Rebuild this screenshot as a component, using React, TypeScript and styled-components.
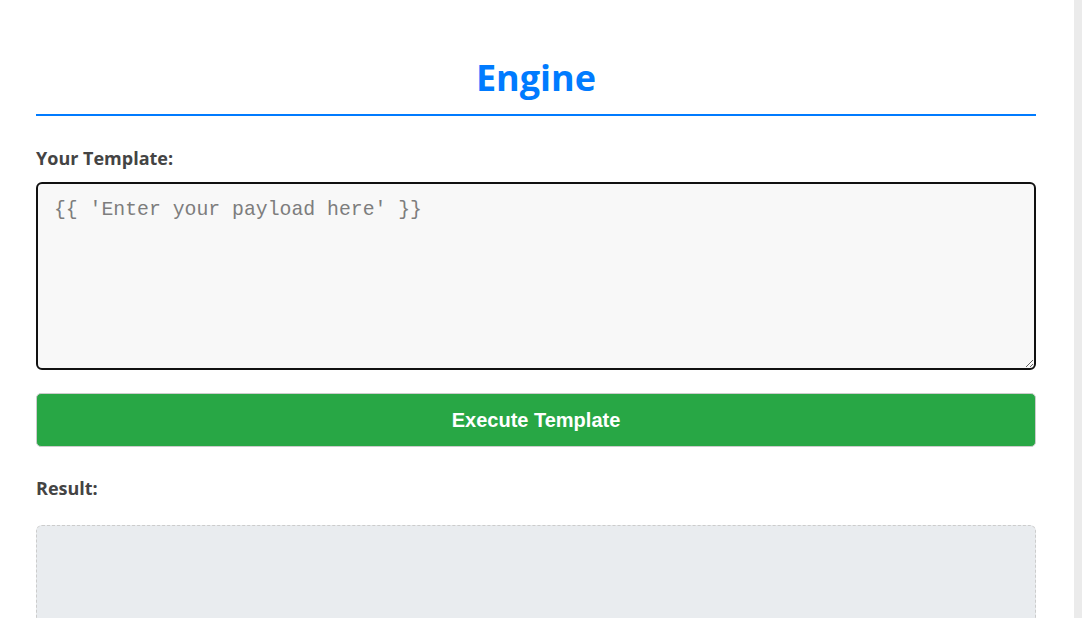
import styled, { createGlobalStyle } from "styled-components";

const GlobalStyle = createGlobalStyle`
  html, body {
    margin: 0;
    height: 100%;
    overflow: hidden;
  }
  body {
    background: #fff;
    font-family: "Open Sans", "Noto Sans", sans-serif;
  }
`;

export default function App() {
  return (
    <>
      <GlobalStyle />
      <Page>
        <Main>
          <Container>
            <Title>Engine</Title>
            <Label htmlFor="template">Your Template:</Label>
            <TemplateInput id="template" placeholder="{{ 'Enter your payload here' }}" />
            <ExecuteButton type="button">Execute Template</ExecuteButton>
            <Label as="div" $top={29}>
              Result:
            </Label>
            <ResultBox />
          </Container>
        </Main>
        <ScrollTrack />
      </Page>
    </>
  );
}

const Page = styled.div`
  display: flex;
  height: 100vh;
`;

const Main = styled.main`
  flex: 1;
  min-width: 0;
  padding-right: 2px;
  overflow-y: auto;
  scrollbar-width: none;

  &::-webkit-scrollbar {
    display: none;
  }
`;

const ScrollTrack = styled.div`
  flex: 0 0 8px;
  background: #ebebeb;
`;

const Container = styled.div`
  max-width: 1000px;
  margin: 0 auto;
  padding: 56px 0 40px;
  display: flex;
  flex-direction: column;
`;

const Title = styled.h1`
  margin: 0;
  font-size: 36px;
  line-height: 44px;
  font-weight: 700;
  color: #007bff;
  text-align: center;
  padding-bottom: 14px;
  border-bottom: 2px solid #007bff;
`;

const Label = styled.label<{ $top?: number }>`
  display: block;
  margin-top: ${({ $top }) => ($top ?? 30)}px;
  margin-bottom: 12px;
  font-size: 18px;
  line-height: 24px;
  font-weight: 700;
  color: #444;
`;

const TemplateInput = styled.textarea`
  box-sizing: border-box;
  width: 100%;
  height: 188px;
  padding: 14px 16px;
  border: 2px solid #111;
  border-radius: 6px;
  background: #f8f8f8;
  font-family: "Liberation Mono", "Courier New", monospace;
  font-size: 19.8px;
  line-height: 24px;
  color: #333;
  outline: none;

  &::placeholder {
    color: #7d7d7d;
  }
`;

const ExecuteButton = styled.button`
  margin-top: 23px;
  height: 54px;
  width: 100%;
  border: 1px solid #ccc;
  border-radius: 5px;
  background: #28a745;
  color: #fff;
  font-family: "Liberation Sans", Arial, sans-serif;
  font-size: 20px;
  font-weight: 700;
  cursor: pointer;
`;

const ResultBox = styled.div`
  margin-top: 13px;
  min-height: 120px;
  border: 1px dashed #ccc;
  border-radius: 6px;
  background: #e9ecef;
`;
